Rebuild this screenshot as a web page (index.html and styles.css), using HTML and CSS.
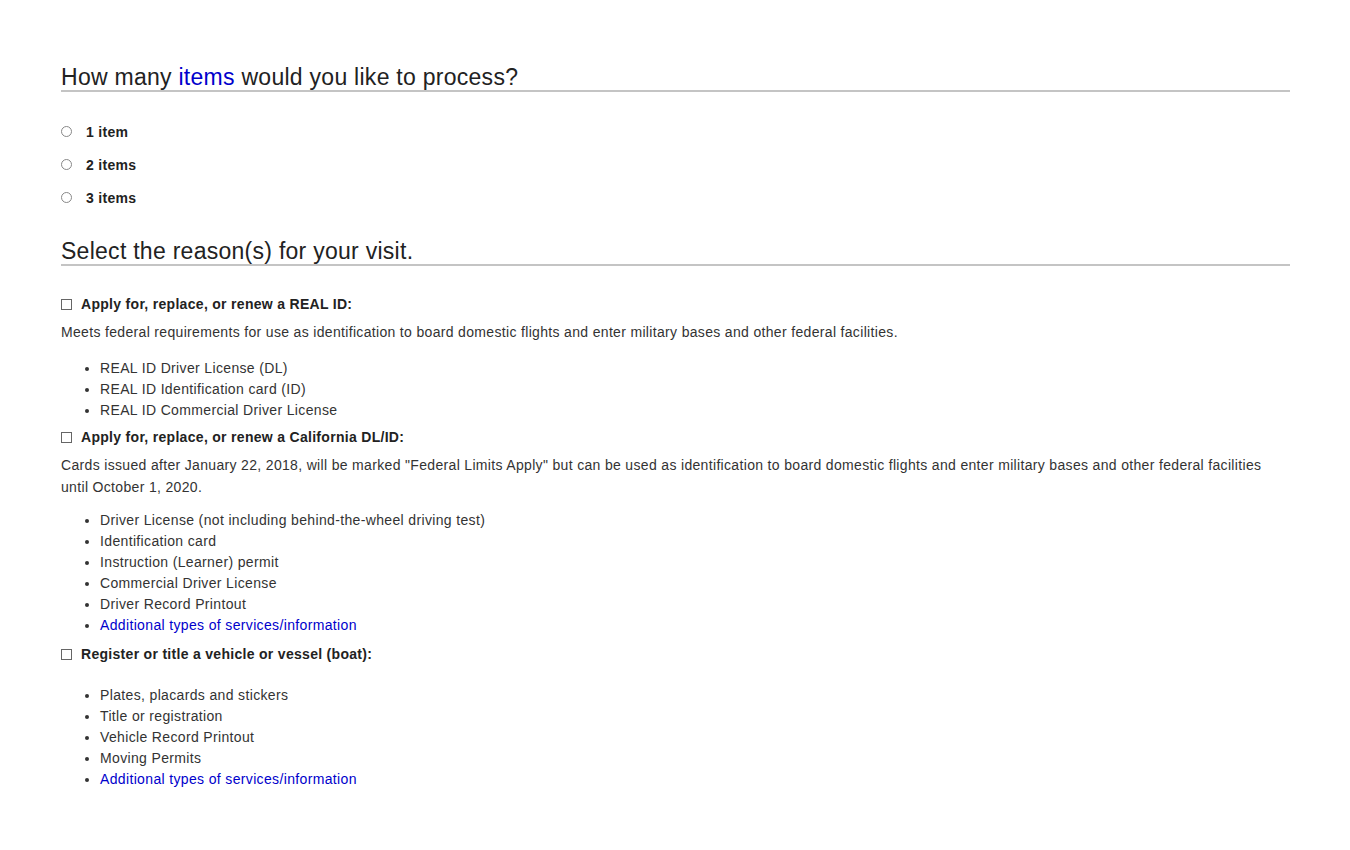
FILE: index.html
```html
<!DOCTYPE html>
<html lang="en">
<head>
<meta charset="utf-8">
<title>Visit</title>
<link rel="stylesheet" href="styles.css">
</head>
<body>
<main class="page">
  <h2 class="section-title first">How many <a href="#" class="link">items</a> would you like to process?</h2>
  <div class="radios">
    <label class="radio-row"><input type="radio" name="count" class="radio"><span class="radio-label">1 item</span></label>
    <label class="radio-row"><input type="radio" name="count" class="radio"><span class="radio-label">2 items</span></label>
    <label class="radio-row"><input type="radio" name="count" class="radio"><span class="radio-label">3 items</span></label>
  </div>

  <h2 class="section-title second">Select the reason(s) for your visit.</h2>

  <div class="reasons">
    <div class="reason">
      <label class="check-row"><input type="checkbox" class="check"><span class="check-label">Apply for, replace, or renew a REAL ID:</span></label>
      <p class="desc">Meets federal requirements for use as identification to board domestic flights and enter military bases and other federal facilities.</p>
      <ul class="items first-list">
        <li>REAL ID Driver License (DL)</li>
        <li>REAL ID Identification card (ID)</li>
        <li>REAL ID Commercial Driver License</li>
      </ul>
    </div>
    <div class="reason">
      <label class="check-row"><input type="checkbox" class="check"><span class="check-label">Apply for, replace, or renew a California DL/ID:</span></label>
      <p class="desc">Cards issued after January 22, 2018, will be marked "Federal Limits Apply" but can be used as identification to board domestic flights and enter military bases and other federal facilities until October 1, 2020.</p>
      <ul class="items second-list">
        <li>Driver License (not including behind-the-wheel driving test)</li>
        <li>Identification card</li>
        <li>Instruction (Learner) permit</li>
        <li>Commercial Driver License</li>
        <li>Driver Record Printout</li>
        <li><a href="#" class="link">Additional types of services/information</a></li>
      </ul>
    </div>
    <div class="reason">
      <label class="check-row"><input type="checkbox" class="check"><span class="check-label">Register or title a vehicle or vessel (boat):</span></label>
      <ul class="items no-desc">
        <li>Plates, placards and stickers</li>
        <li>Title or registration</li>
        <li>Vehicle Record Printout</li>
        <li>Moving Permits</li>
        <li><a href="#" class="link">Additional types of services/information</a></li>
      </ul>
    </div>
  </div>
</main>
</body>
</html>
```

FILE: styles.css
```css
html, body {
  margin: 0;
  padding: 0;
  background: #ffffff;
}

body {
  font-family: "Liberation Sans", Arial, sans-serif;
  color: #333333;
}

.page {
  width: 1229px;
  margin-left: 61px;
  padding-top: 64px;
}

.link {
  color: #0000cc;
  text-decoration: none;
}

.section-title {
  margin: 0;
  font-size: 23px;
  line-height: 26px;
  letter-spacing: 0.27px;
  font-weight: normal;
  color: #222222;
  border-bottom: 2px solid #c4c4c4;
}

.section-title.second {
  margin-top: 24px;
}

.radios {
  margin-top: 23px;
  display: flex;
  flex-direction: column;
}

.radio-row {
  height: 33px;
  display: flex;
  align-items: center;
}

.radio {
  appearance: none;
  -webkit-appearance: none;
  width: 11px;
  height: 11px;
  margin: 0 14px 0 0;
  border: 1px solid #888888;
  border-radius: 50%;
  background: #ffffff;
  box-sizing: border-box;
}

.radio-label {
  font-size: 14px;
  font-weight: bold;
  letter-spacing: 0.3px;
  color: #222222;
}

.reasons {
  margin-top: 29px;
}

.check-row {
  height: 18px;
  display: flex;
  align-items: center;
}

.check {
  appearance: none;
  -webkit-appearance: none;
  width: 11px;
  height: 11px;
  margin: 0 9px 0 0;
  border: 1px solid #666666;
  background: #ffffff;
  box-sizing: border-box;
}

.check-label {
  font-size: 14px;
  font-weight: bold;
  letter-spacing: 0.3px;
  color: #222222;
}

.desc {
  margin: 8px 0 0 0;
  font-size: 14px;
  line-height: 22px;
  letter-spacing: 0.33px;
  color: #333333;
}

.items {
  margin: 13px 0 8px 0;
  padding-left: 39px;
  font-size: 14px;
  line-height: 21px;
  letter-spacing: 0.35px;
  color: #333333;
}

.items.first-list {
  margin-top: 15px;
  margin-bottom: 7px;
}

.items.second-list {
  margin-top: 12px;
  margin-bottom: 9px;
}

.items.no-desc {
  margin-top: 22px;
}
```
